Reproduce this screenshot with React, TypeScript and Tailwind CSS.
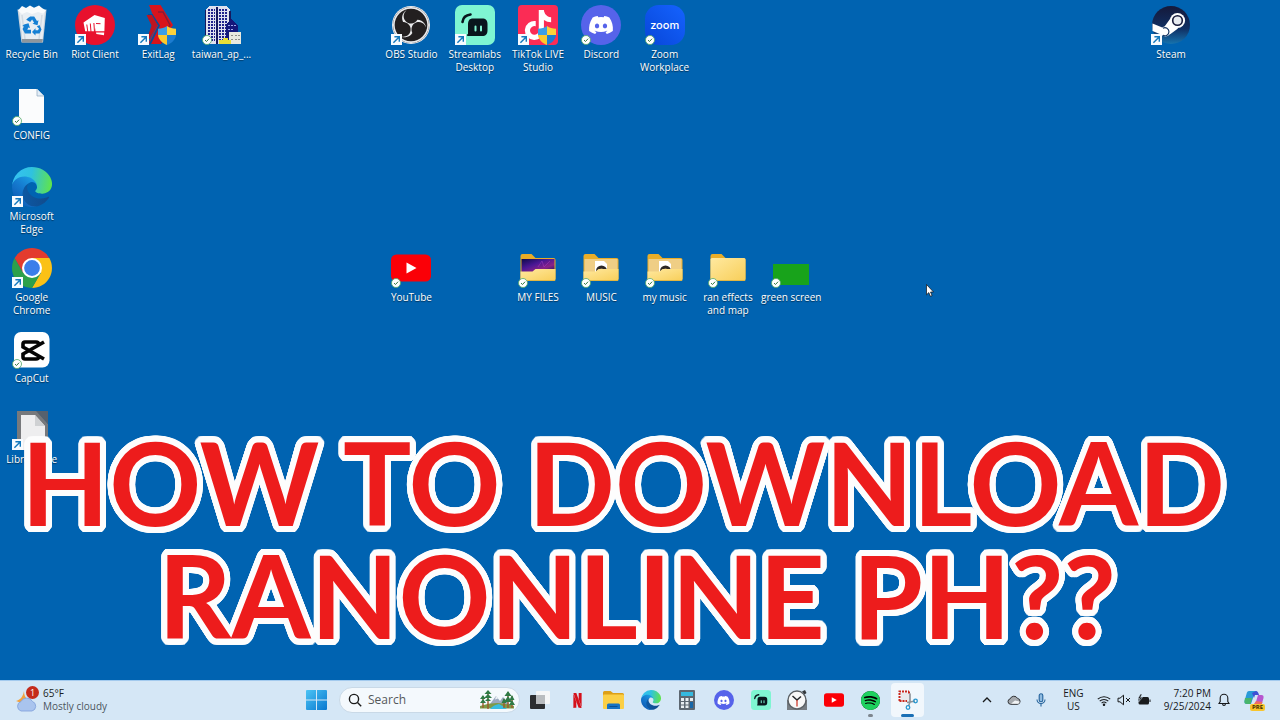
import type { ReactNode } from "react";
import { FaDiscord, FaTiktok } from "react-icons/fa";
import { SiNetflix, SiObsstudio, SiSpotify } from "react-icons/si";

type Badge = "link" | "sync";

const OUTLINE = Array.from({ length: 32 }, (_, i) => {
  const a = (i / 32) * Math.PI * 2;
  return `${(Math.cos(a) * 6).toFixed(2)}px ${(Math.sin(a) * 6).toFixed(2)}px 0 #fdfdfd`;
}).join(", ");

function BadgeMark({ kind }: { kind: Badge }) {
  if (kind === "link") {
    return (
      <svg viewBox="0 0 11 11" className="absolute bottom-0 left-0 h-[11px] w-[11px]">
        <rect width="11" height="11" fill="#f7fbff" />
        <path d="M2.4 8.8 7.6 3.4M3.4 2.8h4.9v4.9" fill="none" stroke="#1479bd" strokeWidth="1.4" />
      </svg>
    );
  }
  return (
    <svg viewBox="0 0 10 10" className="absolute bottom-0 left-0 h-[10px] w-[10px]">
      <circle cx="5" cy="5" r="4.5" fill="#fff" stroke="#4fa866" strokeWidth="0.8" />
      <path d="M3 5.1 4.5 6.5 7.1 3.7" fill="none" stroke="#33793f" strokeWidth="1" />
    </svg>
  );
}

function Shield() {
  return (
    <svg viewBox="0 0 18 19" className="absolute right-[2px] bottom-0 h-[19px] w-[18px]">
      <path d="M9 0C6.5 2 3.5 2.6 0 2.7V9h9z" fill="#3a9ee6" />
      <path d="M9 0c2.5 2 5.5 2.6 9 2.7V9H9z" fill="#fbd13b" />
      <path d="M0 9h9v10C4 17 .5 13.5 0 9z" fill="#fbc92c" />
      <path d="M18 9H9v10c5-2 8.5-5.5 9-10z" fill="#1c7cd0" />
    </svg>
  );
}

function RecycleBin() {
  return (
    <svg viewBox="0 0 40 40" className="h-10 w-10">
      <path d="M5.5 4.5h29L31 37.5H9.5z" fill="#c9d3dc" />
      <path d="M7 5.5h26l-2.5 29h-20z" fill="#e8eef3" />
      <path d="M6 5.5 10 1l4 2 4-2.5 4 2.2L27 .5l3 2.5 4 2.5-3 3-5-1.5-6 2-5-2-5 2z" fill="#f9fbfc" />
      <path d="M10 34h20.8l-.4 3.5H10z" fill="#8f969c" />
      <path d="m10 10 3 24M30 10l-3 24" stroke="#d2dbe3" strokeWidth="1.5" />
      <g fill="#1580d4">
        <path d="m16 13 2.2-1.5h4L25 16l1.5-.8-1 5-5-1.4 1.6-1-2-3.2-1.9 2.4-4-2.3z" />
        <path d="m27.5 20 2 4.500-2 4H23.5v2L20 27l3.5-3.7v2h2.5l1-1.8-2.2-2z" />
        <path d="m12 19.500 4.500-1.200 1.500 4.800-1.700-.7-1 2.300H19V28.500h-6L10.500 24l1.500-2.500-1.700-.6z" />
      </g>
    </svg>
  );
}

function RiotClient() {
  return (
    <svg viewBox="0 0 40 40" className="h-10 w-10">
      <circle cx="20" cy="20" r="20" fill="#e8112d" />
      <path d="M8.500 17.500 19.500 10l10.300 3-.4 13.200h-8.900l-.4-3.200-.5 3.200h-9.400z" fill="#fff" />
      <path d="M21 27.600h8.200l-.2 2.600-7.600-1.200z" fill="#fff" />
      <path d="m11.800 19.500 1 7.500M15.300 18.500l.7 8.500M18.900 18l.6 9M21 18.500l4.500.2" fill="none" stroke="#e8112d" strokeWidth="1" />
    </svg>
  );
}

function ExitLag() {
  return (
    <svg viewBox="0 0 40 40" className="h-10 w-10">
      <path d="M11 0h11.500L35 20 23 39H10l9-18z" fill="#d8141c" />
      <path d="m20 7 5 0 7 13-9 18" fill="none" stroke="#8d1b35" strokeWidth="1.5" />
      <path d="M10 10h4l7 10.500L12 39" fill="none" stroke="#064e98" strokeWidth="1.8" />
      <path d="M8.500 10H14l5.500 10-8 14H9l4.500-13.500z" fill="#bd1520" />
    </svg>
  );
}

function Towers() {
  const rows = [5, 8, 11, 14, 17, 20, 23, 26, 29, 32, 35];
  return (
    <svg viewBox="0 0 40 40" className="h-10 w-10" shapeRendering="crispEdges">
      <path d="M3 39V5l4-4h17l4 4v34z" fill="#dfe1ee" />
      <path d="M14 2h2v37h-2zM3 5h1v34H3zM27 6h2v33h-2z" fill="#15195f" />
      {rows.map((y) => (
        <path key={y} d={`M6 ${y}h2M9 ${y}h2M12 ${y}h1M17 ${y}h2M20 ${y}h2M23 ${y}h2`} stroke="#20238c" strokeWidth="1.5" />
      ))}
      <path d="M24 39V20l5-6 7 6v19z" fill="#15187b" />
      <path d="M26 20h2M29 20h2M32 20h2M26 24h2M29 24h2" stroke="#9ea8ed" />
      <path d="M27 27h12v12H27z" fill="#e9e9df" />
      <path d="M29 30h2M33 30h2M36 30h2M29 34h2M33 34h2M36 34h2" stroke="#8c8c86" strokeWidth="1" />
      <path d="M17 39v-4h4v-2h5v2h3v4z" fill="#e9df36" />
    </svg>
  );
}

function ConfigFile() {
  return (
    <svg viewBox="0 0 40 40" className="h-10 w-10">
      <path d="M7 3h18l7 7v27H7z" fill="#fbfcfd" />
      <path d="M25 3v7h7" fill="#e3edf6" stroke="#8ea7bd" strokeWidth="0.7" />
    </svg>
  );
}

function Edge({ className }: { className: string }) {
  return (
    <svg viewBox="0 0 256 256" className={className}>
      <defs>
        <linearGradient id="edge-low" x1="60" y1="177" x2="240" y2="177" gradientUnits="userSpaceOnUse">
          <stop stopColor="#0c59a4" />
          <stop offset="1" stopColor="#114a8b" />
        </linearGradient>
        <linearGradient id="edge-mid" x1="150" y1="90" x2="45" y2="215" gradientUnits="userSpaceOnUse">
          <stop stopColor="#1b9de2" />
          <stop offset="0.5" stopColor="#157bd0" />
          <stop offset="1" stopColor="#0f62ba" />
        </linearGradient>
        <linearGradient id="edge-top" x1="10" y1="70" x2="250" y2="110" gradientUnits="userSpaceOnUse">
          <stop stopColor="#35c1f1" />
          <stop offset="0.45" stopColor="#2fc2df" />
          <stop offset="1" stopColor="#5fe34e" />
        </linearGradient>
      </defs>
      <path fill="url(#edge-low)" d="M231 190.500c-3.400 1.800-6.900 3.300-10.500 4.700a101.900 101.900 0 0 1-35.900 6.500c-47.300 0-88.500-32.500-88.500-74.300a31.500 31.500 0 0 1 16.400-27.200c-42.800 1.800-53.800 46.400-53.800 72.500 0 74 68.100 81.400 82.800 81.400 7.900 0 19.800-2.300 27-4.600l1.300-.4a128.300 128.300 0 0 0 66.600-52.800 4 4 0 0 0-5.400-5.800z" />
      <path fill="url(#edge-mid)" d="M105.700 241.400a79.200 79.200 0 0 1-22.700-21.300 80.700 80.700 0 0 1 29.500-120c3.100-1.400 8.500-4.100 15.600-4a32.400 32.400 0 0 1 25.700 13 31.900 31.900 0 0 1 6.300 18.700c0-.2 24.500-79.600-80-79.600-43.900 0-80 41.600-80 78.200a130.200 130.200 0 0 0 12.100 56 128 128 0 0 0 156.400 67 75.500 75.500 0 0 1-62.800-8z" />
      <path fill="url(#edge-top)" d="M152.300 148.900c-.8 1-3.300 2.500-3.300 5.700 0 2.600 1.700 5.200 4.800 7.300 14.400 10.100 41.600 8.700 41.700 8.700a59.600 59.600 0 0 0 30.300-8.300 61.400 61.400 0 0 0 30.400-52.900c.3-22.400-8-37.300-11.300-43.900C223.500 23.900 177.700 0 128 0A128 128 0 0 0 0 126.200c.5-36.500 36.800-66 80-66 3.500 0 23.500.3 42 10a72.600 72.600 0 0 1 30.900 29.300c6.100 10.600 7.200 24.100 7.200 29.500s-2.700 13.300-7.800 19.900z" />
    </svg>
  );
}

function Chrome() {
  return (
    <svg viewBox="0 0 40 40" className="h-10 w-10">
      <path d="M20 20 2.700 10A20 20 0 0 1 37.300 10z" fill="#e33b2e" />
      <path d="M20 10h17.300A20 20 0 0 1 20 40l8.700-15z" fill="#fbc116" />
      <path d="M11.300 25 2.700 10A20 20 0 0 0 20 40l8.700-15z" fill="#2da04b" />
      <path d="M2.700 10 11.300 25 20 20V10z" fill="#e33b2e" />
      <circle cx="20" cy="20" r="10" fill="#fff" />
      <circle cx="20" cy="20" r="7.9" fill="#3b7eea" />
    </svg>
  );
}

function CapCut() {
  return (
    <svg viewBox="0 0 40 40" className="h-10 w-10">
      <rect x="2" y="3" width="35.500" height="35.500" rx="7" fill="#fff" />
      <path d="M32 13 11 25v3q0 2 2 2h11q2.500 0 2.500-2M32 30 11 18v-3q0-2 2-2h11q2.500 0 2.500 2" fill="none" stroke="#050505" strokeWidth="3.600" />
    </svg>
  );
}

function LibreOffice() {
  return (
    <svg viewBox="0 0 40 40" className="h-10 w-10">
      <path d="M5 1h20l11 13v26H5z" fill="#77797c" />
      <path d="M24 1h12v13z" fill="#56616d" />
      <path d="M9 5h14l10 11v24H9z" fill="#eeeeef" />
      <path d="M23 5v11h10z" fill="#cfd1d3" />
    </svg>
  );
}

function Streamlabs({ className }: { className: string }) {
  return (
    <svg viewBox="0 0 40 40" className={className}>
      <rect width="40" height="40" rx="7" fill="#7ff5d2" />
      <path d="M7.500 17c.5-4 3.500-7 8-7.500" fill="none" stroke="#09161d" strokeWidth="2.600" strokeLinecap="round" />
      <path d="M18 13.500h9c4 0 5.500 2 5.500 5.500v6c0 4-1.500 6-5.500 6H13c-1.500 0-1.500-1.600 0-2v-9c0-4.500 1.500-6.500 5-6.500z" fill="#09161d" />
      <path d="M20.500 21.500v4M26 21.500v4" stroke="#7ff5d2" strokeWidth="2" strokeLinecap="round" />
    </svg>
  );
}

function YouTube({ className }: { className: string }) {
  return (
    <svg viewBox="0 0 40 40" className={className}>
      <rect y="6.500" width="40" height="27" rx="5.500" fill="#fb0007" />
      <path d="m15.500 14.500 10 5.500-10 5.500z" fill="#fff" />
    </svg>
  );
}

function Folder({ kind }: { kind: "plain" | "music" | "art" }) {
  return (
    <svg viewBox="0 0 40 40" className="h-10 w-10">
      <defs>
        <linearGradient id="folder-face" x1="0" y1="0" x2="1" y2="1">
          <stop stopColor="#ffe9a0" />
          <stop offset="1" stopColor="#f8ce58" />
        </linearGradient>
        <linearGradient id="folder-art" x1="0" y1="0" x2="1" y2="1">
          <stop stopColor="#0b0a49" />
          <stop offset="0.4" stopColor="#4a1795" />
          <stop offset="0.7" stopColor="#8b2386" />
          <stop offset="1" stopColor="#0f1765" />
        </linearGradient>
      </defs>
      <path d="M2.500 8q0-2 2-2h9l4 4h18q2 0 2 2v19h-35z" fill="#e9ad28" />
      {kind === "plain" ? (
        <rect x="2.500" y="10" width="35" height="23" rx="1.500" fill="url(#folder-face)" />
      ) : (
        <>
          <rect x="3.500" y="11" width="33" height="13" fill={kind === "art" ? "url(#folder-art)" : "#efce85"} />
          {kind === "art" && <path d="m20 19 4-6 2 6 6-6" fill="none" stroke="#b343c9" opacity="0.4" />}
          {kind === "music" && (
            <g>
              <path d="M14 13h9l3 3v9H14z" fill="#fff" />
              <path d="M16.500 23a4 4 0 0 1 8 0" fill="#c9a26a" stroke="#2b2725" strokeWidth="3" />
            </g>
          )}
          <path d="M2.500 23.500h12l3-2.500h20v10.500q0 1.500-1.500 1.500H4q-1.500 0-1.500-1.500z" fill="url(#folder-face)" />
        </>
      )}
      <path d="M3 32.500h34" stroke="#dcae39" strokeWidth="0.8" />
    </svg>
  );
}

function ObsStudio() {
  return (
    <span className="flex h-10 w-10 items-center justify-center">
      <span className="flex h-9 w-9 items-center justify-center rounded-full bg-[#231f20] ring-1 ring-[#e9e9eb]">
        <SiObsstudio className="h-9 w-9 text-[#e9e9eb]" />
      </span>
    </span>
  );
}

function TikTokLive() {
  return (
    <span className="flex h-10 w-10 items-center justify-center rounded-[4px] bg-[#fb2c55]">
      <FaTiktok className="h-[30px] w-[30px] text-white" />
    </span>
  );
}

function DiscordMark() {
  return (
    <span className="flex h-10 w-10 items-center justify-center rounded-full bg-[#5663ea]">
      <FaDiscord className="h-[26px] w-[26px] text-white" />
    </span>
  );
}

function ZoomMark() {
  return (
    <span className="flex h-10 w-10 items-center justify-center rounded-[14px] bg-linear-to-tr from-[#0846d8] to-[#1563ff] font-[Inter,sans-serif] text-[11px] leading-none font-medium text-white">
      zoom
    </span>
  );
}

function SteamMark() {
  return (
    <svg viewBox="0 0 40 40" className="h-10 w-10">
      <defs>
        <linearGradient id="steam-bg" x1="0" y1="0" x2="0" y2="1">
          <stop stopColor="#15193a" />
          <stop offset="0.6" stopColor="#103064" />
          <stop offset="1" stopColor="#1673ae" />
        </linearGradient>
      </defs>
      <circle cx="20" cy="20" r="19" fill="url(#steam-bg)" />
      <path d="m1.500 18.500 11 4.500 6.500-9 8 9.500-7.500 5.500-6 2L1.500 26z" fill="#fff" />
      <circle cx="26.500" cy="15.500" r="7.600" fill="#fff" />
      <circle cx="26.500" cy="15.500" r="4.800" fill="#e8ebf0" stroke="#171a3a" strokeWidth="1.600" />
      <circle cx="14.500" cy="26.500" r="5" fill="#fff" />
      <path d="M12 23.200a4 4 0 1 1 0 7" fill="none" stroke="#173663" strokeWidth="1.200" />
    </svg>
  );
}

function GreenScreen() {
  return (
    <svg viewBox="0 0 40 40" className="h-10 w-10">
      <rect x="2" y="16" width="36" height="21" fill="#18a31b" />
    </svg>
  );
}

type Item = { label: string; place: string; icon: ReactNode; badge?: Badge; shield?: boolean };

const ITEMS: Item[] = [
  { label: "Recycle Bin", place: "col-start-1 row-start-1", icon: <RecycleBin /> },
  { label: "Riot Client", place: "col-start-2 row-start-1", icon: <RiotClient />, badge: "link" },
  { label: "ExitLag", place: "col-start-3 row-start-1", icon: <ExitLag />, badge: "link", shield: true },
  { label: "taiwan_ap_...", place: "col-start-4 row-start-1", icon: <Towers />, badge: "sync" },
  { label: "OBS Studio", place: "col-start-7 row-start-1", icon: <ObsStudio />, badge: "link" },
  { label: "Streamlabs Desktop", place: "col-start-8 row-start-1", icon: <Streamlabs className="h-10 w-10" />, badge: "link" },
  { label: "TikTok LIVE Studio", place: "col-start-9 row-start-1", icon: <TikTokLive />, badge: "link", shield: true },
  { label: "Discord", place: "col-start-10 row-start-1", icon: <DiscordMark />, badge: "sync" },
  { label: "Zoom Workplace", place: "col-start-11 row-start-1", icon: <ZoomMark />, badge: "sync" },
  { label: "Steam", place: "col-start-19 row-start-1", icon: <SteamMark />, badge: "link" },
  { label: "CONFIG", place: "col-start-1 row-start-2", icon: <ConfigFile />, badge: "sync" },
  { label: "Microsoft Edge", place: "col-start-1 row-start-3", icon: <Edge className="h-10 w-10" />, badge: "link" },
  { label: "Google Chrome", place: "col-start-1 row-start-4", icon: <Chrome />, badge: "link" },
  { label: "YouTube", place: "col-start-7 row-start-4", icon: <YouTube className="h-10 w-10" />, badge: "sync" },
  { label: "MY FILES", place: "col-start-9 row-start-4", icon: <Folder kind="art" />, badge: "sync" },
  { label: "MUSIC", place: "col-start-10 row-start-4", icon: <Folder kind="music" />, badge: "sync" },
  { label: "my music", place: "col-start-11 row-start-4", icon: <Folder kind="music" />, badge: "sync" },
  { label: "ran effects and map", place: "col-start-12 row-start-4", icon: <Folder kind="plain" />, badge: "sync" },
  { label: "green screen", place: "col-start-13 row-start-4", icon: <GreenScreen />, badge: "sync" },
  { label: "CapCut", place: "col-start-1 row-start-5", icon: <CapCut />, badge: "sync" },
  { label: "LibreOffice", place: "col-start-1 row-start-6", icon: <LibreOffice />, badge: "link" },
];

function DesktopIcon({ item }: { item: Item }) {
  return (
    <button className={["flex min-w-0 flex-col items-center", item.place].join(" ")}>
      <span className="relative block h-10 w-10">
        {item.icon}
        {item.shield && <Shield />}
        {item.badge && <BadgeMark kind={item.badge} />}
      </span>
      <span className="mt-[3px] text-center text-[10px] leading-[13px] text-white [text-shadow:0_1px_1px_rgba(0,0,0,0.5)]">
        {item.label}
      </span>
    </button>
  );
}

function Explorer() {
  return (
    <svg viewBox="0 0 21 20" className="h-5 w-[21px]">
      <path d="M0 2.500Q0 1 1.500 1h6L10 3h9.500Q21 3 21 4.500V18H0z" fill="#dd9f17" />
      <rect y="4.500" width="21" height="14.500" rx="1" fill="#fbcf45" />
      <path d="M4 19v-4q0-1.500 1.500-1.500h10Q17 13.500 17 15v4z" fill="#1673c4" />
      <path d="M6.500 16.500h8" stroke="#0c4f91" />
    </svg>
  );
}

function TaskView() {
  return (
    <svg viewBox="0 0 20 20" className="h-5 w-5">
      <rect x="6" y="1" width="14" height="13" rx="1" fill="#f5f6f7" />
      <rect x="0" y="5" width="15" height="14" rx="1" fill="#2c2e31" />
      <rect x="6" y="5" width="9" height="9" fill="#b9bcbf" />
    </svg>
  );
}

function Calculator() {
  return (
    <svg viewBox="0 0 16 20" className="h-5 w-4">
      <rect width="16" height="20" rx="1" fill="#5d6771" />
      <rect x="2" y="2" width="12" height="4" fill="#35b9df" />
      <path d="M2 8h3v3H2zM6.500 8h3v3h-3zM2 12h3v2.500H2zM6.500 12h3v2.500h-3zM2 15.500h3V18H2zM6.500 15.500h3V18h-3z" fill="#e8edf1" />
      <path d="M11 8h3v3h-3z" fill="#e8edf1" />
      <path d="M11 12h3v6h-3z" fill="#1867a8" />
    </svg>
  );
}

function ClockApp() {
  return (
    <svg viewBox="0 0 20 20" className="h-5 w-5">
      <path d="M15 1.500 18 0l1.500 3-2 1.500z" fill="#33383d" />
      <path d="M0 10h20v10H0z" fill="#777d83" />
      <circle cx="10" cy="10" r="9" fill="#f8f8f8" stroke="#5b6065" strokeWidth="1.400" />
      <path d="m5.500 6 4.500 4 4-3.500" fill="none" stroke="#26292c" strokeWidth="1.500" />
      <path d="M10 10v6.500" stroke="#cf3c2e" strokeWidth="1.300" />
    </svg>
  );
}

function SnippingTool() {
  return (
    <svg viewBox="0 0 20 20" className="h-5 w-5">
      <path d="M3 3h10v9H3z" fill="#e9eaec" />
      <path d="M1.500 11V1.500H11M1.500 11H9M11 1.500V4" fill="none" stroke="#c9281d" strokeWidth="2" strokeDasharray="2 1" />
      <path d="M12 3.500V12l5-1M12 12l-3 0.500M12 12l-1.500 4" fill="none" stroke="#8b9298" strokeWidth="1.600" />
      <circle cx="17.500" cy="11" r="1.800" fill="none" stroke="#2696cf" strokeWidth="1.300" />
      <circle cx="10" cy="17.500" r="1.800" fill="none" stroke="#2696cf" strokeWidth="1.300" />
    </svg>
  );
}

const APPS: { label: string; icon: ReactNode; state?: "open" | "active" }[] = [
  { label: "Task View", icon: <TaskView /> },
  { label: "Netflix", icon: <SiNetflix className="h-[15px] w-[15px] text-[#d5101a]" /> },
  { label: "File Explorer", icon: <Explorer /> },
  { label: "Edge", icon: <Edge className="h-5 w-5" /> },
  { label: "Calculator", icon: <Calculator /> },
  {
    label: "Discord app",
    icon: (
      <span className="flex h-5 w-5 items-center justify-center rounded-full bg-[#5663ea]">
        <FaDiscord className="h-[13px] w-[13px] text-white" />
      </span>
    ),
  },
  { label: "Streamlabs", icon: <Streamlabs className="h-5 w-5" /> },
  { label: "Clock", icon: <ClockApp /> },
  { label: "YouTube app", icon: <YouTube className="h-5 w-5" /> },
  {
    label: "Spotify",
    icon: (
      <span className="rounded-full bg-black">
        <SiSpotify className="h-[19px] w-[19px] text-[#1ed15f]" />
      </span>
    ),
    state: "open",
  },
  { label: "Snipping Tool", icon: <SnippingTool />, state: "active" },
];

function Weather() {
  return (
    <button className="flex items-center gap-[5px] text-left">
      <span className="relative block h-[26px] w-[22px]">
        <svg viewBox="0 0 22 26" className="h-[26px] w-[22px]">
          <path d="M8 4c0 6 3 9 8 10l-8 3-8-3c4-1 7-4 8-10z" fill="#f2a340" />
          <path d="M5 24a5 5 0 0 1 0-9.500 6.500 6.500 0 0 1 11.500 0A5 5 0 0 1 16 24z" fill="#a9c4ee" stroke="#7f9fda" strokeWidth="0.8" />
        </svg>
        <span className="absolute -top-px -right-px flex h-[13px] w-[13px] items-center justify-center rounded-full bg-[#c42b1c] text-[9px] leading-none text-white">
          1
        </span>
      </span>
      <span className="text-[10px] leading-[13px] text-[#1c1f22]">
        <span className="block">65°F</span>
        <span className="block text-[#4c555e]">Mostly cloudy</span>
      </span>
    </button>
  );
}

function Search() {
  return (
    <label className="flex h-[26px] w-[181px] items-center rounded-full border border-[#c9d9e7] bg-[#f4f9fd] pr-1 pl-2">
      <svg viewBox="0 0 14 14" className="h-[14px] w-[14px] shrink-0" fill="none" stroke="#1a1a1a" strokeWidth="1.400">
        <circle cx="6" cy="6" r="4.600" />
        <path d="m9.500 9.500 3.700 3.700" />
      </svg>
      <input
        type="text"
        aria-label="Search"
        placeholder="Search"
        className="ml-[6px] min-w-0 flex-1 bg-transparent text-xs text-[#55585b] outline-none placeholder:text-[#55585b]"
      />
      <svg viewBox="0 0 36 20" className="h-5 w-9 shrink-0">
        <path d="m11 14 6-8 4 5 3-4 7 8z" fill="#9aa9bf" />
        <path d="m17 6 2 2.500-3 1z" fill="#eef2f7" />
        <path d="M1 16q17-6 34 0v2.500H1z" fill="#7d9a47" />
        <path d="M11 19q3-4 9-5 4 2 8 5z" fill="#38bde0" />
        <path d="M9 1v18M4 6v12M29 2v16M25 9v9M33 6v12" stroke="#9a5a2b" strokeWidth="1.400" />
        <path d="m9 0 3.500 4H5.500zM9 4l4 4H5zM9 8l3 3H6zM4 5l2.500 4H1zM4 9l3 4H1zM29 1l3.500 5h-7zM29 6l4 6h-8zM25 8l2.500 5h-5zM33 5l2.500 5h-5zM33 10l3 5h-6z" fill="#2f7a45" />
      </svg>
    </label>
  );
}

function Copilot() {
  return (
    <button aria-label="Copilot" className="relative h-5 w-5">
      <svg viewBox="0 0 20 20" className="h-5 w-5">
        <path d="M5 1h7l2 4h-4L7 14H3q-3 0-2.500-3l2-7Q3 1 5 1z" fill="#2a9bd8" />
        <path d="M1 8h7l-1.500 6H3q-3 0-2.500-3z" fill="#49b56c" />
        <path d="M12 1q2 0 3 4h-4l-1 3-2-5z" fill="#3f50d4" />
        <path d="M14 5h3.500q2.500 0 2 3l-2 7q-.8 3-3 3H8l3-3z" fill="#b756cf" />
        <path d="m12 11 6.500 1-2 5H8z" fill="#ef6c61" />
      </svg>
      <span className="absolute -right-px -bottom-px rounded-[2px] bg-[#f8c52c] px-[2px] text-[6px] leading-[7px] font-bold text-[#3a2c00]">
        PRE
      </span>
    </button>
  );
}

function Tray() {
  return (
    <div className="ml-auto flex items-center pr-4 text-[10px] leading-[13px] text-[#17191b]">
      <button aria-label="Show hidden icons">
        <svg viewBox="0 0 10 10" className="h-[10px] w-[10px]" fill="none" stroke="currentColor" strokeWidth="1.300">
          <path d="m1 7 4-4 4 4" />
        </svg>
      </button>
      <svg viewBox="0 0 14 10" className="ml-[15px] h-[10px] w-[14px]">
        <path d="M3.500 9.300a2.800 2.800 0 0 1-.3-5.500 4 4 0 0 1 7.300-.4 3 3 0 0 1 .2 5.900z" fill="#a5a9ad" stroke="#303336" />
        <path d="M4 8.800 8 5.500l4.500 1q.3 2-1.500 2.300z" fill="#f2f4f5" />
      </svg>
      <svg viewBox="0 0 10 14" className="ml-[15px] h-[14px] w-[10px]" fill="none" stroke="#23629b" strokeWidth="1.100">
        <rect x="3.200" y="0.800" width="3.600" height="8" rx="1.800" fill="#8fbbe0" />
        <path d="M1 6.500a4 4 0 0 0 8 0M5 10.700V13.500" />
      </svg>
      <button className="ml-[17px] text-center">
        <span className="block">ENG</span>
        <span className="block">US</span>
      </button>
      <div className="ml-[13px] flex items-center gap-[6px]">
        <svg viewBox="0 0 14 11" className="h-[11px] w-[14px]" fill="none" stroke="currentColor" strokeWidth="1.100">
          <path d="M.8 4.200a9 9 0 0 1 12.400 0M2.700 6.200a6.200 6.200 0 0 1 8.600 0M4.600 8.100a3.500 3.500 0 0 1 4.800 0" />
          <circle cx="7" cy="9.800" r="0.7" fill="currentColor" />
        </svg>
        <svg viewBox="0 0 14 12" className="h-3 w-[14px]" fill="none" stroke="currentColor">
          <path d="M1 4.200h2L6.500 1.200v9.600L3 7.800H1zM9 4l4 4M13 4 9 8" />
        </svg>
        <svg viewBox="0 0 14 12" className="h-3 w-[14px]">
          <rect x="1.500" y="3" width="10.500" height="7.500" rx="1.500" fill="#191b1d" />
          <path d="M12.500 5.500h1v2.500h-1z" fill="#191b1d" />
          <path d="M3.500 0 1 4.500h2L1.500 8 5.500 3.500h-2L5 0z" fill="#191b1d" stroke="#d5e7f6" strokeWidth="0.5" />
        </svg>
      </div>
      <button className="ml-[13px] text-right">
        <time className="block">7:20 PM</time>
        <time className="block">9/25/2024</time>
      </button>
      <button aria-label="Notifications" className="mr-[14px] ml-[7px]">
        <svg viewBox="0 0 12 14" className="h-[14px] w-3" fill="none" stroke="currentColor" strokeWidth="1.100">
          <path d="M1 10.500 2.200 8.500V5a3.800 3.800 0 0 1 7.600 0v3.500l1.200 2zM4.600 11a1.400 1.400 0 0 0 2.800 0" />
        </svg>
      </button>
      <Copilot />
    </div>
  );
}

function Taskbar() {
  return (
    <footer className="flex h-10 items-center border-t border-[#a3caee] bg-[#d5e7f6] pb-px">
      <div className="w-[306px] pl-4">
        <Weather />
      </div>
      <button aria-label="Start" className="mr-3">
        <svg viewBox="0 0 21 20" className="h-5 w-[21px]">
          <defs>
            <linearGradient id="win" x1="0" y1="0" x2="1" y2="1">
              <stop stopColor="#4cc4f5" />
              <stop offset="1" stopColor="#0877cf" />
            </linearGradient>
          </defs>
          <path d="M0 1q0-1 1-1h9v9.500H0zM11 0h9q1 0 1 1v8.500H11zM0 10.500h10V20H1q-1 0-1-1zM11 10.500h10V19q0 1-1 1h-9z" fill="url(#win)" />
        </svg>
      </button>
      <Search />
      <nav className="ml-[2px] grid w-[404px] grid-cols-11 self-stretch py-[2px]">
        {APPS.map((a) => (
          <button
            key={a.label}
            aria-label={a.label}
            className={[
              "relative mx-[2px] flex items-center justify-center rounded",
              a.state === "active" ? "bg-[#f1f7fc]" : "",
            ].join(" ")}
          >
            {a.icon}
            {a.state === "open" && <span className="absolute bottom-0 h-[3px] w-[5px] rounded-full bg-[#7d868e]" />}
            {a.state === "active" && <span className="absolute bottom-0 h-[3px] w-[13px] rounded-full bg-[#1a6fb5]" />}
          </button>
        ))}
      </nav>
      <Tray />
    </footer>
  );
}

export default function App() {
  return (
    <div className="flex min-h-screen flex-col bg-[#0063b1] font-['Open_Sans','Noto_Sans',sans-serif]">
      <main className="relative flex-1 overflow-hidden pt-[5px] pr-[14px]">
        <div className="grid auto-rows-[81px] grid-cols-[repeat(20,minmax(0,1fr))]">
          {ITEMS.map((item) => (
            <DesktopIcon key={item.label} item={item} />
          ))}
        </div>
        <svg viewBox="0 0 8 13" className="absolute top-[284px] left-[926px] h-[13px] w-2">
          <path d="M.5.500v10.300l2.300-2.200 1.600 3.700 1.700-.7-1.600-3.600h3z" fill="#fff" stroke="#111" strokeWidth="0.7" />
        </svg>
        <h1
          className="absolute right-[6px] bottom-[29px] left-0 text-center font-[Lato,sans-serif] text-[114px] leading-[113px] font-bold whitespace-pre text-[#ed1c1c]"
          style={{ textShadow: OUTLINE }}
        >
          {"HOW TO DOWNLOAD \nRANONLINE PH??"}
        </h1>
      </main>
      <Taskbar />
    </div>
  );
}
